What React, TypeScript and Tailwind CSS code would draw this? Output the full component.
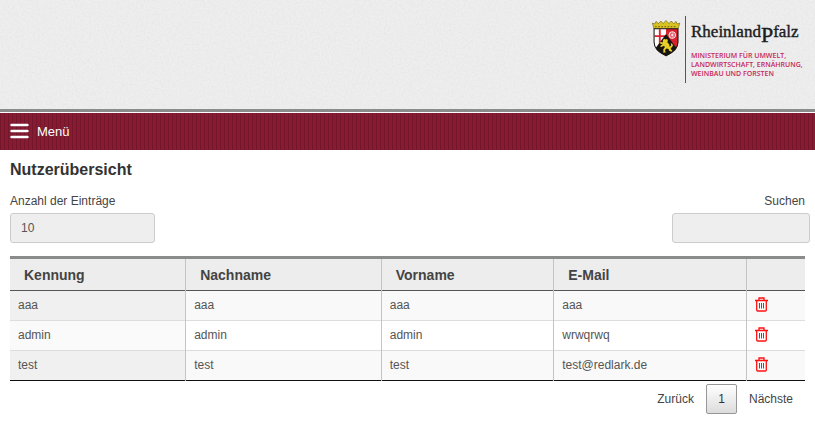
type User = {
  login: string;
  lastName: string;
  firstName: string;
  email: string;
};

const users: User[] = [
  { login: "aaa", lastName: "aaa", firstName: "aaa", email: "aaa" },
  { login: "admin", lastName: "admin", firstName: "admin", email: "wrwqrwq" },
  { login: "test", lastName: "test", firstName: "test", email: "test@redlark.de" },
];

const columns = [
  { label: "Kennung", width: "w-[22.1%]" },
  { label: "Nachname", width: "w-[24.6%]" },
  { label: "Vorname", width: "w-[21.7%]" },
  { label: "E-Mail", width: "w-[24.3%]" },
];

function CoatOfArms() {
  return (
    <g>
      {/* crown */}
      <path
        d="M2 7.500.3 2l2.400.8L4 .3l2 2.400L8.500 0l2.200 2.500L13.500-.5l2.800 3L18.500 0 21 2.700 23 .3l1.300 2.500 2.400-.8L25 7.500z"
        fill="#d9c322"
        stroke="#6b6114"
        strokeWidth=".6"
      />
      <path d="M3 5.500h21" stroke="#5a5110" strokeWidth=".9" strokeDasharray="1.500 1.500" />
      {/* shield */}
      <path d="M2 7.500h23v13c0 7-6 10.500-11.500 13C8 31 2 27.500 2 20.500z" fill="#fff" />
      <path d="M13.500 7.500H25v13c0 3-1 5-2.500 7l-9-13z" fill="#d91f2d" />
      <path d="M7.500 8v16M2.500 14.500h11" stroke="#e2202c" strokeWidth="1.800" />
      <circle cx="19.500" cy="13.500" r="3.200" fill="none" stroke="#fff" strokeWidth=".9" />
      <path d="M19.500 10.500v6M16.500 13.500h6M17.400 11.500l4.200 4M21.600 11.500l-4.200 4" stroke="#fff" strokeWidth=".6" />
      <path d="M13.500 12.500 23.500 26c-2 3.500-6.500 6-10 7.500C10 32 5.500 29.500 3.500 26z" fill="#171410" />
      {/* lion */}
      <path
        d="M10.300 19l1.200-2 1.500.8 1.500-.4.8 1.600-.6 1.500 1.800 1.800.5 2.500 1.500-1.500-.5-2 1.500.5.700 2-2.200 2.700.8 1.500 1.200 1-1.500.6-2-1.100-.6-1.500-2-.6-1.400 1.600.6 2.200-2.600.1.500-1-.2-2 1.500-2-.6-1.600-2.700 1.400-1.300-.8 1-1 1.600-.9-2-.5-1.200-1 1.500-.6 2 .4z"
        fill="#e8cf26"
      />
      <path d="M2 7.500h23v13c0 7-6 10.500-11.500 13C8 31 2 27.500 2 20.500z" fill="none" stroke="#171410" strokeWidth="1" />
    </g>
  );
}

function Logo() {
  return (
    <svg width="160" height="70" viewBox="0 0 160 70" role="img" aria-label="Rheinland-Pfalz">
      <g transform="translate(1 5) scale(1.04)">
        <CoatOfArms />
      </g>
      <path d="M34.500 0v67" stroke="#55555a" strokeWidth="1" />
      <text x="40" y="21" fontSize="17" fill="#1c1c1c" stroke="#1c1c1c" strokeWidth=".4" fontFamily="'Liberation Serif', serif">
        Rheinland
        <tspan fontSize="22" dy="5">P</tspan>
        <tspan dy="-5">falz</tspan>
      </text>
      <g fill="#c8285a" fontFamily="'Open Sans', sans-serif" fontSize="7" fontWeight="600">
        <text x="40" y="42">MINISTERIUM FÜR UMWELT,</text>
        <text x="40" y="51">LANDWIRTSCHAFT, ERNÄHRUNG,</text>
        <text x="40" y="60">WEINBAU UND FORSTEN</text>
      </g>
    </svg>
  );
}

function PaperTexture() {
  return (
    <svg className="absolute inset-0 h-full w-full" aria-hidden="true">
      <filter id="paper">
        <feTurbulence type="fractalNoise" baseFrequency="0.5" numOctaves="2" seed="4" />
        <feColorMatrix values="0 0 0 0 0.4  0 0 0 0 0.4  0 0 0 0 0.4  0.2 0 0 0 -0.07" />
      </filter>
      <rect width="100%" height="100%" filter="url(#paper)" />
    </svg>
  );
}

function TrashIcon() {
  return (
    <svg width="13" height="15" viewBox="0 0 13 15" fill="none" stroke="#ff1010" strokeWidth="1.300" aria-hidden="true">
      <path d="M0 3.500h13M4 3V1h5v2M1.700 3.500v9.500q0 1 1 1h7.600q1 0 1-1V3.500" />
      <path d="M4.500 6v5.500M6.500 6v5.500M8.500 6v5.500" strokeWidth="1" />
    </svg>
  );
}

export default function App() {
  return (
    <div className="bg-white font-['Liberation_Sans',Arial,sans-serif] text-xs text-[#444]">
      <header className="relative flex h-28 justify-end border-b-[3px] border-[#8a8c8c] bg-[#eee] pt-4 pr-1">
        <PaperTexture />
        <a href="#" className="relative h-fit">
          <Logo />
        </a>
      </header>

      <nav className="mt-px flex h-[37px] items-center bg-[#841a30] bg-[repeating-linear-gradient(90deg,#74172c_0px,#74172c_1px,#861b32_1px,#861b32_4px)] px-2.5">
        <button type="button" className="flex items-center gap-2 text-[13px] text-white">
          <svg width="19" height="16" viewBox="0 0 19 16" stroke="#fff" strokeWidth="2.400" strokeLinecap="round" aria-hidden="true">
            <path d="M1.500 2h16M1.500 8h16M1.500 14h16" />
          </svg>
          Menü
        </button>
      </nav>

      <main className="px-2.5 pt-2">
        <h1 className="text-base font-bold text-[#333]">Nutzerübersicht</h1>

        <div className="mt-[11px] flex justify-between">
          <div className="flex flex-col gap-1">
            <label htmlFor="entries">Anzahl der Einträge</label>
            <select
              id="entries"
              defaultValue="10"
              className="h-[30px] w-[145px] appearance-none rounded-[3px] border border-[#ccc] bg-[#eee] px-2.5 text-[#555]"
            >
              <option>10</option>
              <option>25</option>
              <option>50</option>
            </select>
          </div>
          <div className="flex flex-col gap-1">
            <label htmlFor="search" className="text-right">
              Suchen
            </label>
            <input
              id="search"
              type="search"
              className="-mr-[5px] h-[30px] w-[138px] rounded-[3px] border border-[#ccc] bg-[#eee] px-2.5"
            />
          </div>
        </div>

        <table className="mt-[13px] w-full table-fixed border-collapse text-left">
          <thead>
            <tr className="h-[33px] border-t-[3px] border-b border-t-[#8a8c8c] border-b-[#555] bg-[#ededed]">
              {columns.map((column) => (
                <th key={column.label} className={`${column.width} border-r border-r-[#c4c4c4] px-3.5 text-sm text-[#444]`}>
                  {column.label}
                </th>
              ))}
              <th aria-label="Aktionen" />
            </tr>
          </thead>
          <tbody className="border-b border-b-[#111] text-[#555]">
            {users.map((user) => (
              <tr key={user.login} className="group h-[30px] border-t border-t-[#ddd] odd:bg-[#f9f9f9] first:border-t-[#555]">
                <td className="border-r border-r-[#c4c4c4] bg-[#fafafa] px-2 pb-0.5 group-odd:bg-[#f0f0f0]">{user.login}</td>
                <td className="border-r border-r-[#c4c4c4] px-2 pb-0.5">{user.lastName}</td>
                <td className="border-r border-r-[#c4c4c4] px-2 pb-0.5">{user.firstName}</td>
                <td className="border-r border-r-[#c4c4c4] px-2 pb-0.5">{user.email}</td>
                <td className="px-2 pb-0.5">
                  <button type="button" aria-label="Löschen" className="block">
                    <TrashIcon />
                  </button>
                </td>
              </tr>
            ))}
          </tbody>
        </table>

        <div className="mt-[3px] flex items-center justify-end gap-3 pr-3">
          <button type="button">Zurück</button>
          <button
            type="button"
            className="h-[30px] w-[31px] rounded-xs border border-[#979797] bg-linear-to-b from-white to-[#dcdcdc] text-[#333]"
          >
            1
          </button>
          <button type="button">Nächste</button>
        </div>
      </main>
    </div>
  );
}
